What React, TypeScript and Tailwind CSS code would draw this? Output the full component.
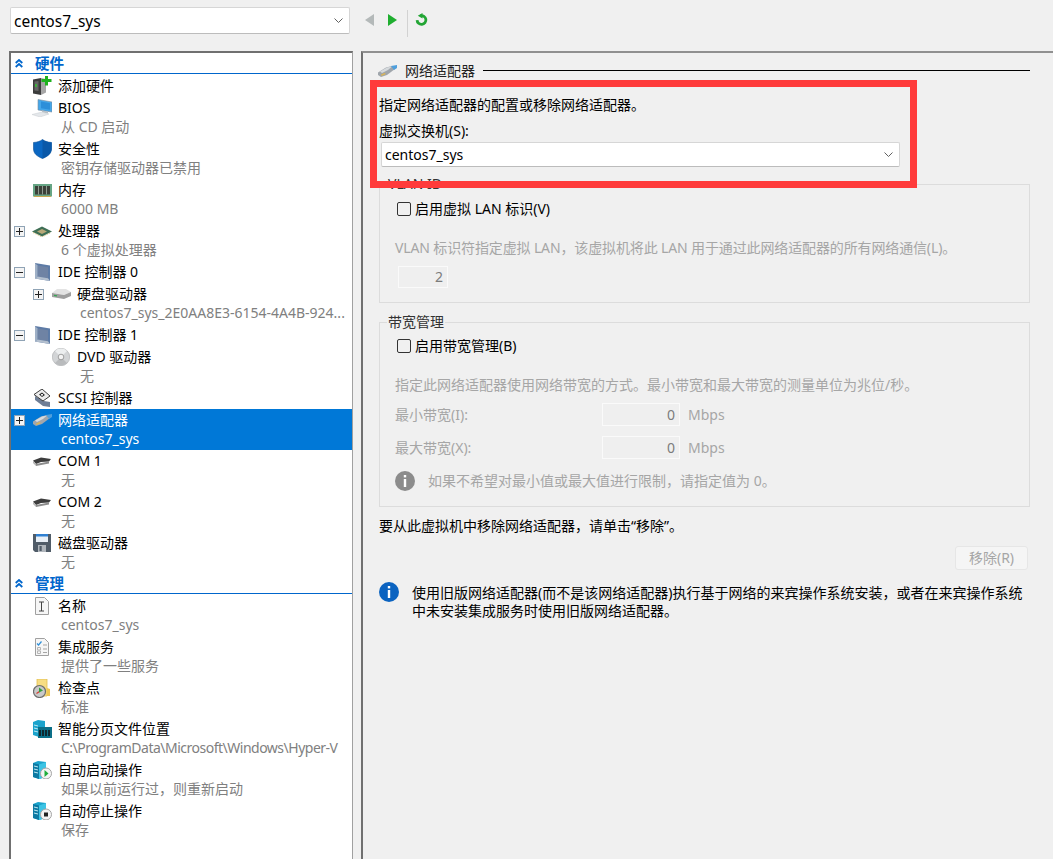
import type { ReactNode } from "react";

const Expander = ({ open }: { open?: boolean }) => (
  <span className="flex h-[11px] w-[11px] items-center justify-center border border-[#8fa3b5] bg-[#f4f4f4]">
    <svg width="9" height="9" viewBox="0 0 9 9">
      <path d={open ? "M1 4.500h7" : "M1 4.500h7M4.500 1v7"} stroke="#222" strokeWidth="1" />
    </svg>
  </span>
);

const Collapse = () => (
  <svg width="8" height="9" viewBox="0 0 8 9" fill="none" stroke="#0066cc" strokeWidth="1.800">
    <path d="M.7 4 4 1l3.300 3M.7 8 4 5l3.300 3" />
  </svg>
);

const AddHardware = () => (
  <svg width="20" height="20" viewBox="0 0 20 20">
    <path d="M1 3.500 9 2v17l-8-1.500z" fill="#3c3c3c" />
    <path d="M9 2l5 1v13.500L9 19z" fill="#a6a6a6" />
    <path d="M2.500 5.500l4-.6V15l-4-.5z" fill="#666" />
    <rect x="3" y="8" width="2" height="3" fill="#3fae3f" />
    <path d="M13 0h3v3h3.500v3H16v3.500h-3V6H9.500V3H13z" fill="#1fb21f" />
  </svg>
);

const Computer = () => (
  <svg width="20" height="18" viewBox="0 0 20 18">
    <path d="M6 .500l14 2.500v10L6 11z" fill="#45a7ea" stroke="#7d8b98" strokeWidth=".6" />
    <path d="M9 2.500l9 1.700v6.500l-9-1.500z" fill="#2d8fd9" />
    <path d="M10 11.500l6 1v2l-6-1z" fill="#b9c0c6" />
    <path d="M0 15.500l10-2.500 7 2-9 3z" fill="#e4e7ea" stroke="#c9cdd1" strokeWidth=".5" />
  </svg>
);

const Shield = () => (
  <svg width="19" height="20" viewBox="0 0 19 20">
    <path d="M9.500.500c2.300 1.800 5.300 2.800 9 3v6.500c0 4.500-3.800 7.500-9 9.500-5.200-2-9-5-9-9.500V3.500c3.700-.2 6.700-1.200 9-3z" fill="#0b67c2" stroke="#0a4f96" strokeWidth=".6" />
    <path d="M9.500.500c2.300 1.800 5.300 2.800 9 3v6.500c0 4.500-3.800 7.500-9 9.500z" fill="#0a58a8" />
  </svg>
);

const Memory = () => (
  <svg width="19" height="13" viewBox="0 0 19 13">
    <rect width="19" height="12.500" fill="#66a585" />
    <rect x="2" y="2" width="15" height="8.500" fill="#3a4139" />
    <path d="M5.500 2v8.500M9.500 2v8.500M13.500 2v8.500" stroke="#8f9a90" strokeWidth="1" />
    <path d="M1 12.500h17" stroke="#c9a850" strokeWidth="1" />
  </svg>
);

const Cpu = () => (
  <svg width="20" height="11" viewBox="0 0 20 11">
    <path d="M0 5.500 10 .5l10 5-10 5z" fill="#3f6f55" />
    <path d="M5 5.500 10 3l5 2.500L10 8z" fill="#b8a878" />
    <path d="M1 6.500l9 4.500 9-4.500" fill="none" stroke="#c9a850" strokeWidth=".8" strokeDasharray="1 1" />
  </svg>
);

const Controller = () => (
  <svg width="15" height="18" viewBox="0 0 15 18">
    <path d="M0 0l15 2.500V18L0 15.500z" fill="#5d7ba6" />
    <path d="M2.500 2.500 13 4.200v11L2.500 13.500z" fill="#6f83a4" />
    <path d="M0 0l2.500 2.500v11L0 15.500z" fill="#9fb0c6" />
    <path d="M0 15.500l2.500-2 10.500 1.700 2 2.800z" fill="#b3bfce" />
  </svg>
);

const Disk = () => (
  <svg width="19" height="10" viewBox="0 0 19 10">
    <path d="M0 4l5-4h9l5 3-7 3z" fill="#e3e3e3" />
    <path d="M0 4l12 2 7-3v4l-7 3-12-2z" fill="#9f9f9f" />
    <path d="M2 6.300l3 .5" stroke="#35a853" strokeWidth="1.200" />
  </svg>
);

const Dvd = () => (
  <svg width="18" height="18" viewBox="0 0 18 18">
    <circle cx="9" cy="9" r="8.700" fill="#d2d4d6" stroke="#a9abad" strokeWidth=".6" />
    <path d="M9 9 3 3a8.500 8.500 0 0 1 12 0z" fill="#eceeef" />
    <path d="M9 9l6 6a8.500 8.500 0 0 1-12 0z" fill="#b9bbbd" />
    <circle cx="9" cy="9" r="2.800" fill="#f3f3f3" stroke="#8d8d8d" strokeWidth=".8" />
  </svg>
);

const Scsi = () => (
  <svg width="17" height="18" viewBox="0 0 17 18">
    <path d="M1 7l9 5 6 1v5l-7-1-8-6z" fill="#6e7e96" />
    <path d="M0 5.500 8 0l8 7-7 5z" fill="#ececec" stroke="#2b2b2b" strokeWidth=".9" />
    <path d="M5 5.500 8 3.500l3 2.500-3 2z" fill="#2b2b2b" />
    <rect x="7" y="5" width="2" height="1.600" fill="#ececec" />
  </svg>
);

const NetPlug = () => (
  <svg width="19" height="12" viewBox="0 0 19 12" className="shrink-0">
    <path d="M0 7.500 8 2.500 14 1l3 3-8 6-6 2-3-2z" fill="#a0a6ac" />
    <path d="M2 6.500 9 2.500l5-1-4 3.500-6 3z" fill="#d6dadd" />
    <path d="M3 9.500l4-1.700.6 1.400-4 1.700z" fill="#d8b45a" />
    <path d="M13 1l6-1v3l-3 2z" fill="#4f9fdc" />
  </svg>
);

const Serial = () => (
  <svg width="18" height="9" viewBox="0 0 18 9">
    <path d="M0 3.500 8 .5 18 2l-2 2.500-8 .5-5 2z" fill="#3d3d3d" />
    <path d="M0 3.500l3 3.500v2L0 6z" fill="#b4b4b4" />
    <path d="M3 7l13-2.500V6.500L3 9z" fill="#8c8c8c" />
  </svg>
);

const Floppy = () => (
  <svg width="18" height="18" viewBox="0 0 18 18">
    <path d="M0 0h18v18H2l-2-2z" fill="#505c68" />
    <rect x="3" y="0" width="12" height="8" fill="#e8eff6" />
    <rect x="3" y="0" width="12" height="2.500" fill="#2f80d2" />
    <rect x="5" y="11" width="8" height="7" fill="#b0b6bc" />
    <rect x="6.500" y="12" width="2.200" height="5" fill="#505c68" />
  </svg>
);

const NameDoc = () => (
  <svg width="14" height="18" viewBox="0 0 14 18">
    <path d="M.5.500h9l4 4v13H.5z" fill="#f6f6f6" stroke="#a0a0a0" />
    <path d="M4 5h5M4 14h5M6.500 5v9" stroke="#444" strokeWidth="1" fill="none" />
  </svg>
);

const ServiceDoc = () => (
  <svg width="14" height="18" viewBox="0 0 14 18">
    <path d="M.5.500h9l4 4v13H.5z" fill="#f6f6f6" stroke="#a0a0a0" />
    <path d="M2 5.500l1.500 1.500L6.500 3.500" stroke="#2f8fd8" strokeWidth="1.200" fill="none" />
    <path d="M8 7h4M8 11h4M8 14.500h4" stroke="#a5a5a5" />
    <path d="M2.500 9.500h3V12h-3zM2.500 13h3v2.500h-3z" fill="none" stroke="#b5b5b5" />
  </svg>
);

const Checkpoint = () => (
  <svg width="18" height="19" viewBox="0 0 18 19">
    <path d="M4 0h10v17H4z" fill="#f7dd83" stroke="#e2bf50" strokeWidth=".8" />
    <path d="M14 9l3 1v7h-3z" fill="#eec653" />
    <circle cx="6.500" cy="12.500" r="6" fill="#c9c9c9" stroke="#6d6d6d" strokeWidth="1.200" />
    <path d="M6.500 12.500l-3 2" stroke="#d23b2e" strokeWidth="1.200" />
    <path d="M6 8.500l4 3-4 2z" fill="#35a03c" />
  </svg>
);

const Server = ({ badge }: { badge?: ReactNode }) => (
  <svg width="19" height="18" viewBox="0 0 19 18">
    <path d="M0 2l5-2 8 1v15l-7 2-6-2z" fill="#1ba3cc" />
    <path d="M0 2l6 1.500V18l-6-2z" fill="#0d7aa3" />
    <path d="M1 5l4 1M1 8l4 1M1 11l4 1" stroke="#bfeaf5" strokeWidth="1" />
    <path d="M6 3.500L13 1v15l-7 2z" fill="#3cc3e4" />
    {badge}
  </svg>
);

const PageFile = () => (
  <svg width="19" height="19" viewBox="0 0 19 19">
    <path d="M0 2l5-2 7 1v14l-6 2-6-2z" fill="#1ba3cc" />
    <path d="M1 5l4 1M1 8l4 1M1 11l4 1" stroke="#bfeaf5" strokeWidth="1" />
    <rect x="5" y="7" width="14" height="11" fill="#0b6f88" />
    <path d="M7 10v6M10 10v6M13 10v6M16 10v6" stroke="#111" strokeWidth="1.500" />
  </svg>
);

const PlayBadge = (
  <>
    <circle cx="13" cy="12.500" r="5.500" fill="#f4f4f4" stroke="#a5a5a5" />
    <path d="M11.500 9l4 3.500-4 3.500z" fill="#1fae3a" />
  </>
);

const StopBadge = (
  <>
    <circle cx="13" cy="12.500" r="5.500" fill="#f4f4f4" stroke="#a5a5a5" />
    <rect x="11" y="10.500" width="4" height="4" fill="#222" />
  </>
);

const Info = ({ grey }: { grey?: boolean }) => (
  <svg width="20" height="20" viewBox="0 0 20 20" className="shrink-0">
    <circle cx="10" cy="10" r="10" fill={grey ? "#8c8c8c" : "#0b63c0"} />
    <rect x="8.800" y="4" width="2.400" height="2.400" fill="#fff" />
    <rect x="8.800" y="8" width="2.400" height="8" fill="#fff" />
  </svg>
);

const Chevron = () => (
  <svg width="9" height="5" viewBox="0 0 9 5" fill="none" stroke="#606060" strokeWidth="1">
    <path d="M.5.500 4.500 4.500 8.500.5" />
  </svg>
);

const Section = ({ title }: { title: string }) => (
  <div className="mb-[1px] flex h-[21px] items-center border-b border-[#0066cc] pl-[3px]">
    <span className="flex w-[21px] pl-px"><Collapse /></span>
    <span className="text-[14.500px] font-bold text-[#0066cc]">{title}</span>
  </div>
);

type RowProps = {
  icon: ReactNode;
  title: string;
  sub?: string;
  subClass?: string;
  depth?: 0 | 1;
  toggle?: "plus" | "minus";
  selected?: boolean;
};

const Row = ({ icon, title, sub, subClass, depth = 0, toggle, selected }: RowProps) => (
  <div className={selected ? "bg-[#0078d7] text-white" : "text-black"}>
    <div className={`flex h-[22px] items-center ${depth === 1 ? "pl-[22px]" : "pl-[3px]"}`}>
      <span className="flex w-[18px] shrink-0 items-center">
        {toggle && <Expander open={toggle === "minus"} />}
      </span>
      <span className="flex w-[20px] shrink-0 items-center justify-center">{icon}</span>
      <span className="ml-[6px] whitespace-nowrap">{title}</span>
    </div>
    {sub && (
      <div
        className={`flex h-[19px] items-center whitespace-nowrap pb-[4px] ${depth === 1 ? "pl-[69px]" : "pl-[50px]"} ${selected ? "text-white" : "text-[#808080]"} ${subClass ?? ""}`}
      >
        {sub}
      </div>
    )}
  </div>
);

const Combo = ({ text, className }: { text: string; className: string }) => (
  <div className={`flex items-center justify-between rounded-[2px] border border-[#d6d6d6] border-b-[#bcbcbc] bg-white ${className}`}>
    <span>{text}</span>
    <Chevron />
  </div>
);

const NumberBox = ({ value, className }: { value: string; className: string }) => (
  <div className={`flex items-center justify-end border border-[#fafafa] bg-[#efefef] pr-[4px] text-[#7c7c7c] ${className}`}>
    {value}
  </div>
);

const CheckBox = () => (
  <span className="ml-[2px] h-[14px] w-[14px] shrink-0 rounded-[2px] border border-[#333]" />
);

const GroupLabel = ({ children }: { children: string }) => (
  <span className="absolute left-[7px] top-[-11px] bg-[#f0f0f0] px-px leading-[20px] text-[#333]">{children}</span>
);

export default function App() {
  return (
    <div className="h-[859px] w-[1053px] overflow-hidden bg-[#f0f0f0] font-['Noto_Sans','Noto_Sans_CJK_SC',sans-serif] text-[14px] leading-[20px] text-black">
      <div className="flex h-[51px] items-start pl-[10px] pt-[7px]">
        <Combo text="centos7_sys" className="h-[27px] w-[340px] pl-[3px] pr-[6px] text-[15.500px]" />
        <div className="ml-[15px] flex h-[25px] items-center">
          <svg width="9" height="12" viewBox="0 0 9 12"><path d="M9 0v12L0 6z" fill="#b4b9b9" /></svg>
          <svg className="ml-[14px]" width="9" height="12" viewBox="0 0 9 12"><path d="M0 0v12l9-6z" fill="#1fae2f" /></svg>
          <span className="ml-[10px] mt-[3px] h-[27px] w-px self-start bg-[#d2d2d2]" />
          <svg className="ml-[7px]" width="13" height="13" viewBox="0 0 13 13" fill="none">
            <path d="M5.500 2.700a4.400 4.400 0 1 1-3.400 4.400" stroke="#22a534" strokeWidth="2.800" />
            <path d="M7.500 0 2.800 2.800l4.700 2.800z" fill="#22a534" />
          </svg>
        </div>
      </div>

      <div className="flex h-[808px]">
        <div className="ml-[9px] w-[344px] shrink-0 overflow-hidden border-t-2 border-l-2 border-r border-t-[#707070] border-l-[#707070] border-r-[#a0a0a0] bg-white">
          <Section title="硬件" />
          <Row icon={<AddHardware />} title="添加硬件" />
          <Row icon={<Computer />} title="BIOS" sub="从 CD 启动" />
          <Row icon={<Shield />} title="安全性" sub="密钥存储驱动器已禁用" />
          <Row icon={<Memory />} title="内存" sub="6000 MB" />
          <Row icon={<Cpu />} title="处理器" sub="6 个虚拟处理器" toggle="plus" />
          <Row icon={<Controller />} title="IDE 控制器 0" toggle="minus" />
          <Row icon={<Disk />} title="硬盘驱动器" sub="centos7_sys_2E0AA8E3-6154-4A4B-924..." depth={1} toggle="plus" />
          <Row icon={<Controller />} title="IDE 控制器 1" toggle="minus" />
          <Row icon={<Dvd />} title="DVD 驱动器" sub="无" depth={1} />
          <Row icon={<Scsi />} title="SCSI 控制器" />
          <Row icon={<NetPlug />} title="网络适配器" sub="centos7_sys" toggle="plus" selected />
          <Row icon={<Serial />} title="COM 1" sub="无" />
          <Row icon={<Serial />} title="COM 2" sub="无" />
          <Row icon={<Floppy />} title="磁盘驱动器" sub="无" />
          <Section title="管理" />
          <Row icon={<NameDoc />} title="名称" sub="centos7_sys" />
          <Row icon={<ServiceDoc />} title="集成服务" sub="提供了一些服务" />
          <Row icon={<Checkpoint />} title="检查点" sub="标准" />
          <Row icon={<PageFile />} title="智能分页文件位置" sub="C:\ProgramData\Microsoft\Windows\Hyper-V" subClass="tracking-[-0.5px]" />
          <Row icon={<Server badge={PlayBadge} />} title="自动启动操作" sub="如果以前运行过，则重新启动" />
          <Row icon={<Server badge={StopBadge} />} title="自动停止操作" sub="保存" />
        </div>

        <div className="relative ml-[8px] min-w-0 flex-1 border-t-2 border-l-2 border-t-[#909090] border-l-[#707070] pl-[16px] pr-[23px]">
          <div className="flex h-[33px] items-center pt-[2px]">
            <span className="ml-[-1px]"><NetPlug /></span>
            <span className="ml-[8px] text-[#222]">网络适配器</span>
            <span className="ml-[8px] h-px flex-1 bg-black" />
          </div>
          <div className="mt-[9px]">指定网络适配器的配置或移除网络适配器。</div>
          <div className="mt-[6px]">虚拟交换机(S):</div>
          <Combo text="centos7_sys" className="ml-[2px] mt-[1px] h-[25px] w-[519px] pl-[3px] pr-[6px]" />

          <div className="relative mt-[17px] h-[119px] border border-[#dcdcdc] pl-[15px] pr-[4px] pt-[14px]">
            <GroupLabel>VLAN ID</GroupLabel>
            <div className="flex items-center gap-[4px]"><CheckBox />启用虚拟 LAN 标识(V)</div>
            <div className="mt-[19px] tracking-[-0.13px] text-[#a6a6a6]">VLAN 标识符指定虚拟 LAN，该虚拟机将此 LAN 用于通过此网络适配器的所有网络通信(L)。</div>
            <NumberBox value="2" className="ml-[3px] mt-[8px] h-[22px] w-[50px]" />
          </div>

          <div className="relative mt-[19px] h-[185px] border border-[#dcdcdc] pl-[15px] pr-[4px] pt-[13px]">
            <GroupLabel>带宽管理</GroupLabel>
            <div className="flex items-center gap-[4px]"><CheckBox />启用带宽管理(B)</div>
            <div className="mt-[19px] text-[#a6a6a6]">指定此网络适配器使用网络带宽的方式。最小带宽和最大带宽的测量单位为兆位/秒。</div>
            <div className="mt-[8px] flex h-[23px] items-center text-[#a6a6a6]">
              <span className="w-[207px]">最小带宽(I):</span>
              <NumberBox value="0" className="h-[23px] w-[78px]" />
              <span className="ml-[8px]">Mbps</span>
            </div>
            <div className="mt-[10px] flex h-[23px] items-center text-[#a6a6a6]">
              <span className="w-[207px]">最大带宽(X):</span>
              <NumberBox value="0" className="h-[23px] w-[78px]" />
              <span className="ml-[8px]">Mbps</span>
            </div>
            <div className="mt-[12px] flex items-center text-[#a6a6a6]">
              <Info grey />
              <span className="ml-[13px]">如果不希望对最小值或最大值进行限制，请指定值为 0。</span>
            </div>
          </div>

          <div className="mt-[9px]">要从此虚拟机中移除网络适配器，请单击“移除”。</div>
          <div className="mt-[10px] flex justify-end pr-[2px]">
            <div className="flex h-[24px] w-[73px] items-center justify-center rounded-[3px] border border-[#e6e6e6] bg-[#f5f5f5] text-[#a6a6a6]">移除(R)</div>
          </div>
          <div className="mt-[12px] flex items-start">
            <Info />
            <p className="ml-[13px] mt-[2px] w-[616px] leading-[18px]">使用旧版网络适配器(而不是该网络适配器)执行基于网络的来宾操作系统安装，或者在来宾操作系统中未安装集成服务时使用旧版网络适配器。</p>
          </div>

          <div className="absolute left-[7px] top-[27px] h-[108px] w-[547px] border-[7px] border-[#ff3b3b]" />
        </div>
      </div>
    </div>
  );
}
